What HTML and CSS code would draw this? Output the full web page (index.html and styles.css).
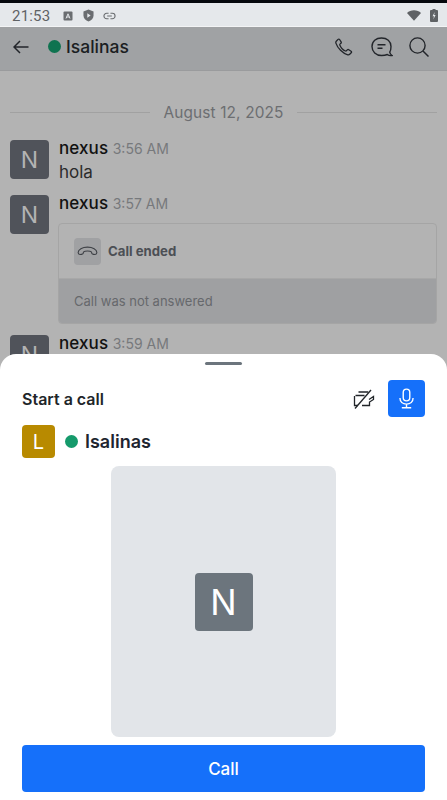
FILE: index.html
```html
<!DOCTYPE html>
<html lang="en">
<head>
<meta charset="utf-8">
<title>Isalinas</title>
<link rel="stylesheet" href="styles.css">
</head>
<body>
<div class="app">
  <div class="status">
    <span class="clock">21:53</span>
    <svg class="st-a" viewBox="0 0 10 10"><rect x="0.5" y="0.5" width="9" height="9" rx="1" fill="#6a6d70"/><path d="M3 7.5 5 2.8l2 4.7M3.8 6h2.4" fill="none" stroke="#e5e8eb" stroke-width="1"/></svg>
    <svg class="st-shield" viewBox="0 0 12 14"><path d="M6 .5 11.5 2.5V7c0 3.2-2.4 5.5-5.5 6.5C2.900 12.500.5 10.200.5 7V2.500Z" fill="#6a6d70"/><path d="M4.700 4.500 8.300 7 4.700 9.500Z" fill="#e5e8eb"/></svg>
    <svg class="st-link" viewBox="0 0 14 8"><path d="M6 1H4a3 3 0 0 0 0 6h2M8 1h2a3 3 0 0 1 0 6H8M4.500 4h5" fill="none" stroke="#6a6d70" stroke-width="1.200"/></svg>
    <span class="status-fill"></span>
    <svg class="st-wifi" viewBox="0 0 16 12"><path d="M0 3C2 1.200 4.800 0 8 0s6 1.200 8 3L8 12Z" fill="#5f6265"/></svg>
    <svg class="st-batt" viewBox="0 0 8 13"><path d="M2.500 0h3v1H7a1 1 0 0 1 1 1v10a1 1 0 0 1-1 1H1a1 1 0 0 1-1-1V2a1 1 0 0 1 1-1h1.500Z" fill="#5f6265"/><path d="M4.700 3 2.500 7.200H4L3.300 10.500 5.600 6H4.100Z" fill="#e5e8eb"/></svg>
  </div>

  <header class="topbar">
    <svg class="ic-back" viewBox="0 0 16 14"><path d="M15.500 7H1M7 1 1 7l6 6" fill="none" stroke="#22252a" stroke-width="1.500"/></svg>
    <span class="dot dot-dim"></span>
    <span class="top-name">Isalinas</span>
    <span class="status-fill"></span>
    <svg class="ic-phone" viewBox="0 0 18 18"><path d="M1.300 3.200 3 1.400c.5-.5 1.200-.5 1.600.1l1.500 2.300c.3.500.2 1-.2 1.400L5 6.100c-.3.300-.3.600-.2.900.9 2.300 3.300 5.100 5.700 6 .3.100.6.100.9-.2l.9-.9c.4-.4 1-.5 1.500-.2l2.300 1.500c.6.400.6 1.100.1 1.600l-1.500 1.500c-.5.500-1.200.7-1.900.5C7.700 15.500 2.500 10 .9 5.100c-.2-.7 0-1.400.4-1.900Z" fill="none" stroke="#22252a" stroke-width="1.300"/></svg>
    <svg class="ic-chat" viewBox="0 0 22 20"><path d="M10.500 1C5 1 1 4.300 1 9.500S5 18.500 10.500 18.500c2.200 0 4.500-.4 5.800-1 1.200.9 2.900 1.300 4.700 1-1.100-.7-2-1.900-2.300-3.300 1-1.300 1.300-3.200 1.300-5.700C20 4.300 16 1 10.500 1Z" fill="none" stroke="#22252a" stroke-width="1.400"/><path d="M6.500 7.800h8M6.500 11.300h5" fill="none" stroke="#22252a" stroke-width="1.400"/></svg>
    <svg class="ic-search" viewBox="0 0 20 20"><circle cx="8.500" cy="8.500" r="7.600" fill="none" stroke="#22252a" stroke-width="1.400"/><path d="M14 14l5.500 5.500" stroke="#22252a" stroke-width="1.500"/></svg>
  </header>

  <main class="chat">
    <div class="date-row"><span class="rule"></span><span class="date">August 12, 2025</span><span class="rule"></span></div>

    <div class="msg">
      <div class="avatar">N</div>
      <div class="msg-body">
        <div class="meta"><span class="author">nexus</span> <span class="time">3:56 AM</span></div>
        <div class="text">hola</div>
      </div>
    </div>

    <div class="msg">
      <div class="avatar">N</div>
      <div class="msg-body">
        <div class="meta"><span class="author">nexus</span> <span class="time">3:57 AM</span></div>
        <div class="call-card">
          <div class="call-head">
            <span class="call-icon"><svg viewBox="0 0 22 10"><path d="M1.200 6.700C1.200 3.300 5.500 1 11 1s9.800 2.300 9.800 5.700c0 1.300-.8 2-1.900 2-1.300 0-2.300-.3-3-.8-.6-.5-.4-1.400-.9-1.900C14.300 5.300 12.700 5 11 5s-3.300.3-4 1c-.5.500-.3 1.400-.9 1.900-.7.500-1.700.8-3 .8-1.100 0-1.900-.7-1.900-2Z" fill="none" stroke="#3f4247" stroke-width="1.200"/></svg></span>
            <span class="call-title">Call ended</span>
          </div>
          <div class="call-foot">Call was not answered</div>
        </div>
      </div>
    </div>

    <div class="msg">
      <div class="avatar">N</div>
      <div class="msg-body">
        <div class="meta"><span class="author">nexus</span> <span class="time">3:59 AM</span></div>
      </div>
    </div>
  </main>

  <section class="sheet">
    <div class="handle"></div>
    <div class="sheet-head">
      <span class="sheet-title">Start a call</span>
      <svg class="ic-video" viewBox="0 0 22 20"><path d="M5.500 3h9.800M2.500 6.500h9M1.500 7v9.500h3.500M9 16.500h7.500v-3.500l4-2.500V7.500L16 10.500" fill="none" stroke="#212529" stroke-width="1.300"/><path d="M2 19.500 18 1" stroke="#212529" stroke-width="1.300"/></svg>
      <button class="mic-btn" type="button" aria-label="Microphone">
        <svg viewBox="0 0 16 22"><rect x="4.500" y="1" width="7" height="12.500" rx="3.500" fill="none" stroke="#fff" stroke-width="1.500"/><path d="M1 10.500c0 4 3 6.500 7 6.500s7-2.500 7-6.500M8 17v3.500M3 20.800h10" fill="none" stroke="#fff" stroke-width="1.500"/></svg>
      </button>
    </div>
    <div class="peer">
      <div class="peer-avatar">L</div>
      <span class="dot dot-live"></span>
      <span class="peer-name">Isalinas</span>
    </div>
    <div class="preview"><div class="preview-avatar">N</div></div>
    <button class="call-btn" type="button">Call</button>
  </section>
</div>
</body>
</html>
```

FILE: styles.css
```css
* { box-sizing: border-box; }
html, body { margin: 0; padding: 0; }
body { font-family: Inter, "Liberation Sans", sans-serif; background: #b3b3b3; }

.app {
  position: relative;
  width: 447px;
  height: 800px;
  overflow: hidden;
  background: #b3b3b3;
}

.status {
  display: flex;
  align-items: center;
  height: 27px;
  padding: 2px 9px 0 12px;
  border-top: 3px solid #05080d;
  border-bottom: 1px solid #f3f4f5;
  background: #e5e8eb;
  color: #5f6265;
}
.clock { font-family: Roboto, sans-serif; font-size: 15px; letter-spacing: .2px; margin-right: 13px; }
.st-a { width: 10px; height: 10px; margin-right: 10px; }
.st-shield { width: 11px; height: 13px; margin-right: 9px; }
.st-link { width: 13px; height: 8px; }
.status-fill { flex: 1; }
.st-wifi { width: 14px; height: 11px; margin-right: 9px; }
.st-batt { width: 8px; height: 13px; }

.topbar {
  display: flex;
  align-items: center;
  height: 44px;
  padding: 0 18px 4px 13px;
  background: #a0a2a4;
  border-bottom: 1px solid #9a9b9d;
}
.ic-back { width: 16px; height: 14px; margin-right: 19px; }
.dot { display: block; border-radius: 50%; }
.dot-dim { width: 13px; height: 13px; background: #0f7350; margin-right: 5px; }
.top-name { font-size: 17.5px; font-weight: 500; color: #1b1e22; }
.ic-phone { width: 18px; height: 18px; margin-right: 18px; }
.ic-chat { width: 22px; height: 20px; margin-right: 16px; }
.ic-search { width: 20px; height: 20px; }

.chat { display: flex; flex-direction: column; padding: 30px 10px 0; }
.date-row { display: flex; align-items: center; gap: 13px; height: 22px; margin-bottom: 17px; }
.rule { flex: 1; height: 1px; background: #a1a1a1; }
.date { font-size: 15.4px; color: #6c6e71; letter-spacing: .15px; }

.msg { display: flex; gap: 10px; margin-bottom: 11px; }
.avatar {
  flex: none;
  display: flex;
  align-items: center;
  justify-content: center;
  width: 39px;
  height: 39px;
  border-radius: 4px;
  background: #50535a;
  color: #b3b3b3;
  font-size: 23px;
}
.msg-body { flex: 1; min-width: 0; }
.meta { height: 18px; line-height: 17px; white-space: nowrap; }
.author { font-size: 17px; font-weight: 500; color: #111; letter-spacing: .1px; }
.time { font-size: 14px; color: #77797c; }
.text { font-size: 17px; line-height: 24px; color: #2b2b2b; margin-top: 2px; }

.call-card {
  margin: 10px 0 0 -1px;
  border: 1px solid #a5a5a5;
  border-radius: 4px;
  overflow: hidden;
}
.call-head {
  display: flex;
  align-items: center;
  gap: 7px;
  height: 55px;
  padding: 0 15px;
  border-bottom: 1px solid #a8a8a8;
}
.call-icon {
  display: flex;
  align-items: center;
  justify-content: center;
  width: 27px;
  height: 27px;
  border-radius: 4px;
  background: #a0a1a3;
}
.call-icon svg { width: 21px; height: 10px; }
.call-title { font-size: 13.2px; font-weight: 700; color: #4c4f55; }
.call-foot {
  display: flex;
  align-items: center;
  height: 44px;
  padding: 0 15px;
  background: #9fa0a2;
  font-size: 13px;
  color: #66686c;
}

.sheet {
  position: absolute;
  left: 0;
  right: 0;
  bottom: 0;
  height: 446px;
  display: flex;
  flex-direction: column;
  padding: 8px 22px 8px;
  border-radius: 16px 16px 0 0;
  background: #fff;
}
.handle { align-self: center; width: 37px; height: 3px; border-radius: 2px; background: #6c757d; }
.sheet-head { display: flex; align-items: center; height: 37px; margin-top: 15px; }
.sheet-title { flex: 1; font-size: 16px; font-weight: 600; color: #212529; }
.ic-video { width: 22px; height: 20px; margin-right: 13px; }
.mic-btn {
  display: flex;
  align-items: center;
  justify-content: center;
  width: 37px;
  height: 37px;
  padding: 0;
  border: 0;
  border-radius: 4px;
  background: #1570fa;
}
.mic-btn svg { width: 15px; height: 21px; }

.peer { display: flex; align-items: center; margin-top: 8px; }
.peer-avatar {
  display: flex;
  align-items: center;
  justify-content: center;
  width: 33px;
  height: 33px;
  border-radius: 4px;
  background: #b88a00;
  color: #fff;
  font-size: 20px;
}
.dot-live { width: 13px; height: 13px; background: #159a6b; margin: 0 7px 0 10px; }
.peer-name { font-size: 18px; font-weight: 600; color: #1e2530; }

.preview {
  align-self: center;
  display: flex;
  align-items: center;
  justify-content: center;
  width: 225px;
  height: 271px;
  margin-top: 8px;
  border-radius: 8px;
  background: #e2e5e9;
}
.preview-avatar {
  display: flex;
  align-items: center;
  justify-content: center;
  width: 58px;
  height: 58px;
  border-radius: 4px;
  background: #6c757d;
  color: #fff;
  font-size: 35px;
}

.call-btn {
  height: 47px;
  margin-top: 8px;
  border: 0;
  border-radius: 4px;
  background: #1570fa;
  color: #fff;
  font-family: inherit;
  font-size: 17px;
  font-weight: 500;
}
```
